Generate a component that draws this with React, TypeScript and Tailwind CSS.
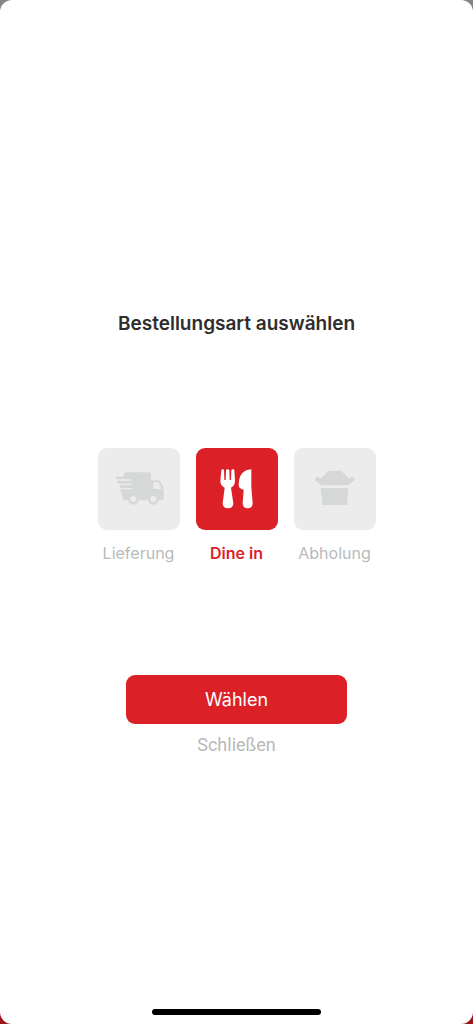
import { useState } from 'react'

function TruckIcon() {
  return (
    <svg viewBox="0 0 246 246" className="size-full" fill="currentColor" aria-hidden>
      <path d="M52 86h23l2-7q2-6 8-6h70q4 0 4 4v20h22q4 0 6 4l10 20v30q0 6-6 6h-7a18 18 0 0 0-36 0h-24a18 18 0 0 0-36 0h-8q-4 0-5-4l-8-29h33q3 0 3-2t-3-2H68l-5-9h38q3 0 3-2t-3-2H61l-5-9h42q3 0 3-2t-3-2H56z" />
      <circle cx="106" cy="153" r="17" />
      <circle cx="166" cy="153" r="17" />
      <g className="text-[#ececec]">
        <path d="M166 103h13q2 0 3 2l9 18h-25z" fill="currentColor" />
        <circle cx="106" cy="153" r="9" fill="currentColor" />
        <circle cx="166" cy="153" r="9" fill="currentColor" />
      </g>
    </svg>
  )
}

function CutleryIcon() {
  return (
    <svg viewBox="0 0 246 246" className="size-full" fill="currentColor" aria-hidden>
      <path d="M76 67q0-3 4-3t4 3l1 29h4l1-29q1-3 5-3t5 3l1 29h4l1-29q1-3 5-3t4 3l2 31q0 15-12 21l7 47q0 15-16 15t-16-15l6-47q-13-6-13-21z" />
      <path d="M166 64v54l4 48q0 15-15 15t-15-15l3-41q-15-3-15-14 0-44 38-47z" />
    </svg>
  )
}

function TakeawayIcon() {
  return (
    <svg viewBox="0 0 246 246" className="size-full" fill="currentColor" aria-hidden>
      <path d="M104 68h37l25 24 8-7 9 10-20 17H80L62 95l9-10 8 7z" />
      <path d="M80 120h83l-4 51H85z" />
    </svg>
  )
}

const ORDER_TYPES = [
  { id: 'delivery', label: 'Lieferung', Icon: TruckIcon },
  { id: 'dine-in', label: 'Dine in', Icon: CutleryIcon },
  { id: 'pickup', label: 'Abholung', Icon: TakeawayIcon },
]

export default function App() {
  const [selected, setSelected] = useState('dine-in')

  return (
    <div className="min-h-dvh flex flex-col bg-linear-to-b from-[#85848a] from-50% to-[#9c1519] to-50% font-[Inter,sans-serif]">
      <div className="flex-1 flex flex-col items-center bg-white rounded-[12px]">
        <main className="flex-1 w-full flex flex-col items-center justify-center pt-[58px]">
          <h1 className="text-[19px] leading-7 font-semibold text-[#2d2d2d]">Bestellungsart auswählen</h1>

          {/* Order types */}
          <div className="my-[110px] flex gap-4">
            {ORDER_TYPES.map(({ id, label, Icon }) => {
              const active = id === selected
              return (
                <button
                  key={id}
                  type="button"
                  aria-pressed={active}
                  onClick={() => setSelected(id)}
                  className="w-[82px] flex flex-col items-center gap-[11px] cursor-pointer"
                >
                  <span
                    className={`size-[82px] rounded-[9px] overflow-hidden ${
                      active ? 'bg-[#db2127] text-white' : 'bg-[#ececec] text-[#d5d8d7]'
                    }`}
                  >
                    <Icon />
                  </span>
                  <span
                    className={`text-[16px] leading-6 whitespace-nowrap ${
                      active ? 'font-semibold text-[#db2127]' : 'text-[#b9babc]'
                    }`}
                  >
                    {label}
                  </span>
                </button>
              )
            })}
          </div>

          {/* Actions */}
          <div className="w-full px-[126px] flex flex-col items-center gap-[9px]">
            <button
              type="button"
              className="w-full h-[49px] rounded-[9px] bg-[#db2127] text-white text-[18px] leading-6 cursor-pointer"
            >
              Wählen
            </button>
            <button type="button" className="font-[Roboto,sans-serif] text-[18px] leading-6 text-[#b9b9b9] cursor-pointer">
              Schließen
            </button>
          </div>
        </main>

        {/* Home indicator */}
        <div className="mb-[9px] h-1.5 w-[169px] rounded-full bg-black" />
      </div>
    </div>
  )
}
